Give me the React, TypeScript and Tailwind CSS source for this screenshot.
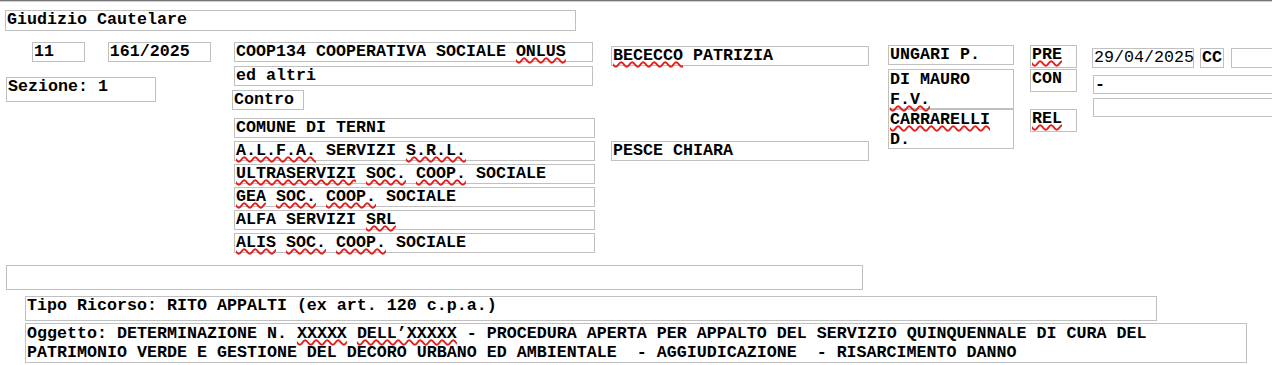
import React from 'react';

const Field = ({ className = '', children = null, normal = false }: { className?: string; children?: React.ReactNode; normal?: boolean }) => (
  <div
    className={`border border-[#c0c0c0] px-[1px] text-[16.667px] leading-[18px] text-black ${normal ? 'font-normal' : 'font-bold'} ${className}`}
  >
    {children}
  </div>
);

// red squiggle the browser spellchecker draws
const Sp = ({ children }: { children: React.ReactNode }) => (
  <span className="underline decoration-wavy decoration-[#e0201c] decoration-[1.5px] underline-offset-[1px]">{children}</span>
);

const parti = [
  <>COMUNE DI TERNI</>,
  <><Sp>A.L.F.A.</Sp> SERVIZI <Sp>S.R.L.</Sp></>,
  <><Sp>ULTRASERVIZI</Sp> <Sp>SOC.</Sp> <Sp>COOP.</Sp> SOCIALE</>,
  <><Sp>GEA</Sp> <Sp>SOC.</Sp> <Sp>COOP.</Sp> SOCIALE</>,
  <>ALFA SERVIZI <Sp>SRL</Sp></>,
  <><Sp>ALIS</Sp> <Sp>SOC.</Sp> <Sp>COOP.</Sp> SOCIALE</>,
];

export default function App() {
  return (
    <div
      className="w-[1272px] h-[365px] overflow-hidden bg-white border-t border-[#767676]"
      style={{ fontFamily: '"Liberation Mono", "Courier New", monospace' }}
    >
      <div className="border-t border-[#d2d2d2] whitespace-pre">
        <Field className="mt-[8px] ml-[5px] w-[571px] h-[21px]">Giudizio Cautelare</Field>

        <div className="flex items-start mt-[11px]">
          {/* numero / sezione */}
          <div className="w-[211px] shrink-0">
            <div className="flex pl-[32px]">
              <Field className="w-[53px] h-[20px]">11</Field>
              <Field className="ml-[23px] w-[104px] h-[20px]">161/2025</Field>
            </div>
            <Field className="mt-[15px] ml-[6px] w-[150px] h-[25px]">Sezione: 1</Field>
          </div>

          {/* parti */}
          <div className="ml-[21px] w-[363px] shrink-0">
            <Field className="ml-[2px] w-[359px] h-[20px]">COOP134 COOPERATIVA SOCIALE <Sp>ONLUS</Sp></Field>
            <Field className="mt-[4px] ml-[2px] w-[359px] h-[20px]">ed altri</Field>
            <Field className="mt-[4px] w-[72px] h-[20px] px-0">Contro</Field>
            <div className="mt-[8px] ml-[2px] flex flex-col gap-[3px]">
              {parti.map((p, i) => (
                <Field key={i} className="w-[361px] h-[20px]">{p}</Field>
              ))}
            </div>
          </div>

          {/* avvocati */}
          <div className="ml-[16px] w-[258px] shrink-0">
            <Field className="mt-[4px] h-[20px]"><Sp>BECECCO</Sp> PATRIZIA</Field>
            <Field className="mt-[75px] h-[20px]">PESCE CHIARA</Field>
          </div>

          {/* collegio */}
          <div className="ml-[19px] w-[126px] shrink-0">
            <Field className="mt-[3px] h-[20px]">UNGARI P.</Field>
            <Field className="mt-[4px] h-[40px] leading-[20px] whitespace-normal">DI MAURO <Sp>F.V.</Sp></Field>
            <Field className="h-[40px] leading-[20px] whitespace-normal"><Sp>CARRARELLI</Sp> D.</Field>
          </div>

          <div className="ml-[16px] w-[47px] shrink-0">
            <Field className="mt-[3px] h-[23px]"><Sp>PRE</Sp></Field>
            <Field className="mt-[1px] h-[23px]">CON</Field>
            <Field className="mt-[17px] h-[23px]"><Sp>REL</Sp></Field>
          </div>

          {/* udienza */}
          <div className="ml-[15px] flex-1 min-w-0">
            <div className="flex mt-[6px]">
              <Field normal className="w-[102px] h-[20px] shrink-0">29/04/2025</Field>
              <Field className="ml-[6px] w-[24px] h-[20px] px-0 shrink-0">CC</Field>
              <Field className="ml-[7px] w-[80px] h-[20px] shrink-0" />
            </div>
            <Field className="mt-[7px] ml-[1px] w-[220px] h-[19px]">-</Field>
            <Field className="mt-[4px] ml-[1px] w-[220px] h-[19px]" />
          </div>
        </div>

        <Field className="mt-[12px] ml-[6px] w-[857px] h-[25px]" />
        <Field className="mt-[6px] ml-[25px] w-[1132px] h-[25px]">Tipo Ricorso: RITO APPALTI (ex art. 120 c.p.a.)</Field>
        <Field className="mt-[2px] ml-[25px] w-[1222px] h-[40px] leading-[19px]">
          Oggetto: DETERMINAZIONE N. <Sp>XXXXX</Sp> <Sp>DELL’XXXXX</Sp> - PROCEDURA APERTA PER APPALTO DEL SERVIZIO QUINQUENNALE DI CURA DEL{'\n'}PATRIMONIO VERDE E GESTIONE DEL DECORO URBANO ED AMBIENTALE  - AGGIUDICAZIONE  - RISARCIMENTO DANNO
        </Field>
      </div>
    </div>
  );
}
